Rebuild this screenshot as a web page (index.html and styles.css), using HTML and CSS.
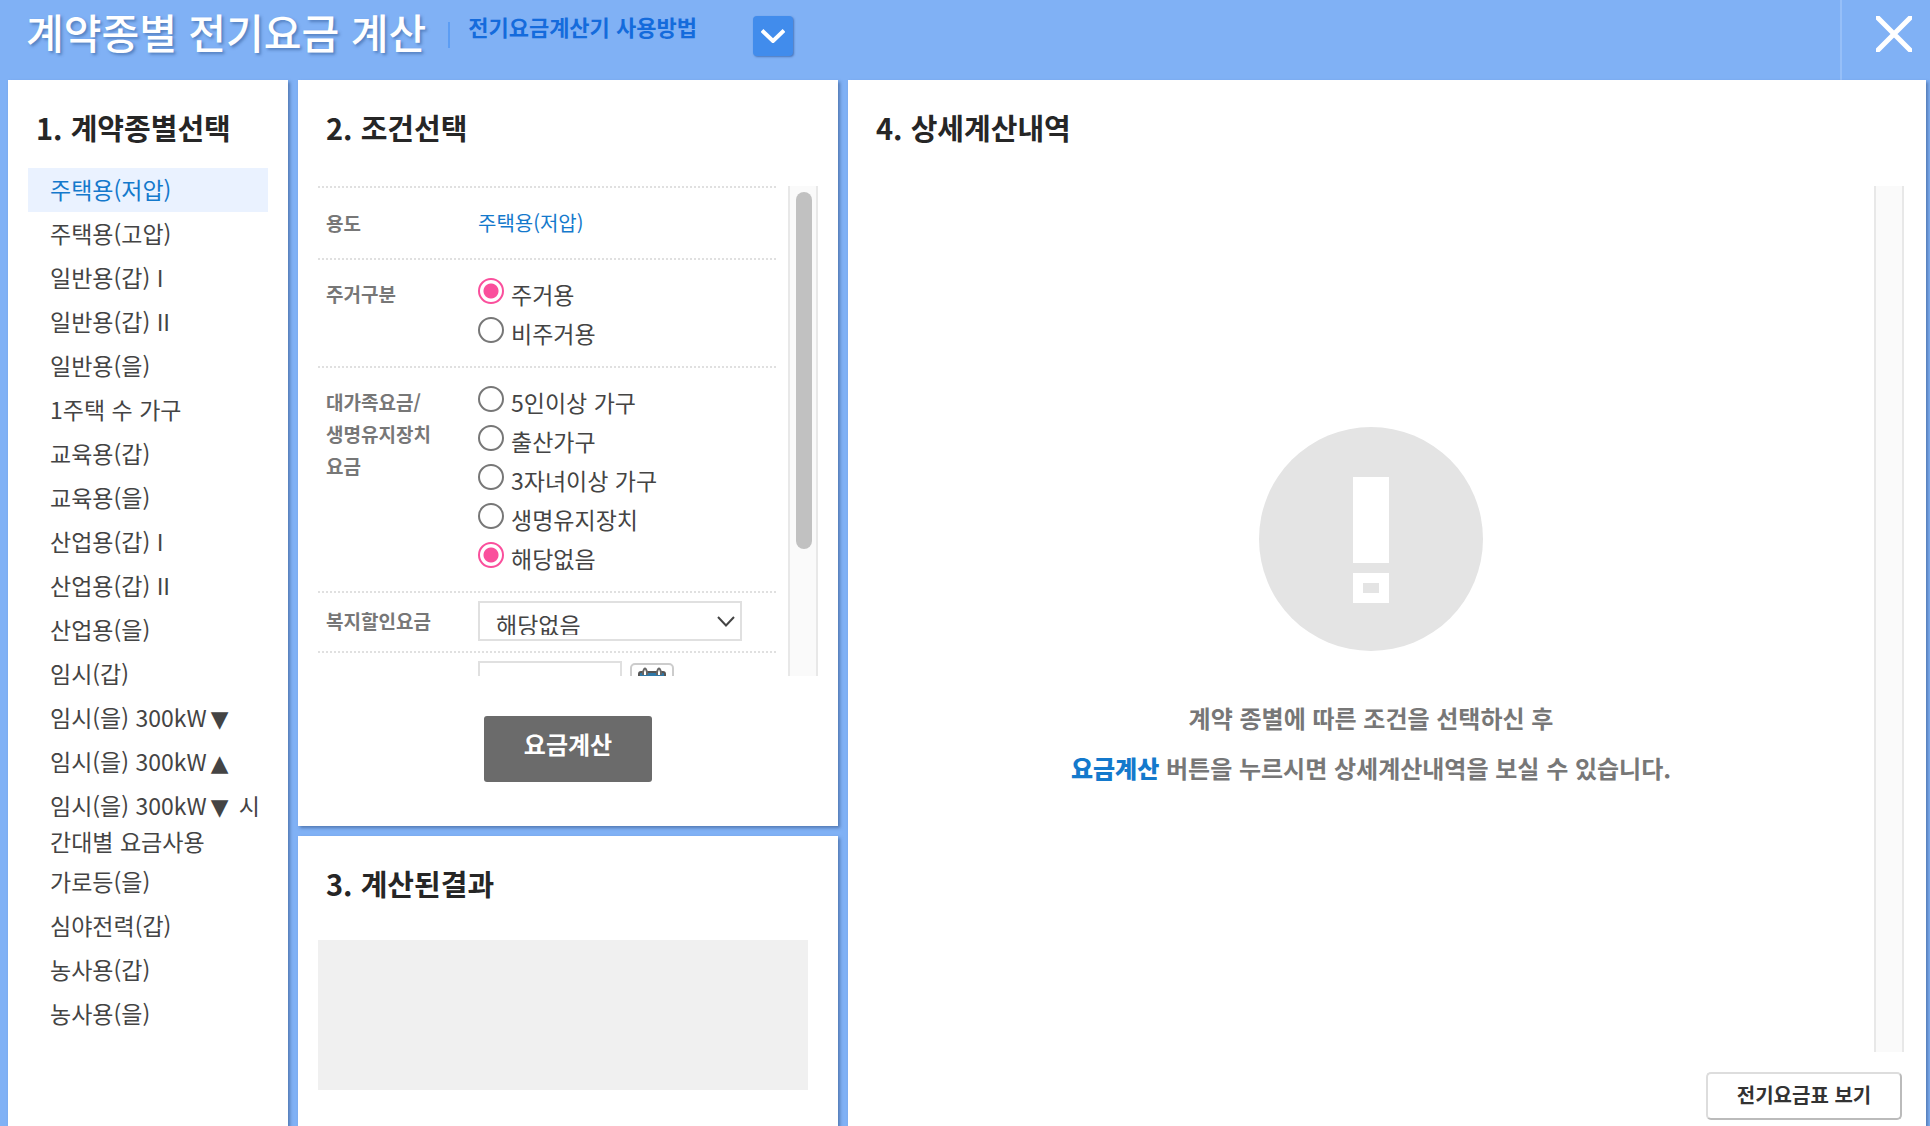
FILE: index.html
```html
<!DOCTYPE html>
<html lang="ko">
<head>
<meta charset="utf-8">
<meta name="viewport" content="width=device-width, initial-scale=1">
<title>계약종별 전기요금 계산</title>
<link rel="stylesheet" href="styles.css">
</head>
<body>
<header class="topbar">
  <h1 class="topbar-title">계약종별 전기요금 계산</h1>
  <span class="topbar-divider"></span>
  <a class="topbar-guide" href="#guide">전기요금계산기 사용방법</a>
  <button class="guide-toggle" type="button" aria-label="사용방법 펼치기">
    <svg width="24" height="14" viewBox="0 0 24 14" aria-hidden="true"><path d="M1 1.500 12 12 23 1.500" fill="none" stroke="#fff" stroke-width="4"/></svg>
  </button>
  <button class="close" type="button" aria-label="닫기">
    <svg width="36" height="36" viewBox="0 0 36 36" aria-hidden="true"><path d="M0 0 36 36M36 0 0 36" stroke="#fff" stroke-width="5"/></svg>
  </button>
</header>

<main class="board">
  <section class="panel">
    <h2 class="panel-title">1. 계약종별선택</h2>
    <ul class="contracts">
      <li><a class="contract is-active" href="#c1">주택용(저압)</a></li>
      <li><a class="contract" href="#c2">주택용(고압)</a></li>
      <li><a class="contract" href="#c3">일반용(갑) I</a></li>
      <li><a class="contract" href="#c4">일반용(갑) II</a></li>
      <li><a class="contract" href="#c5">일반용(을)</a></li>
      <li><a class="contract" href="#c6">1주택 수 가구</a></li>
      <li><a class="contract" href="#c7">교육용(갑)</a></li>
      <li><a class="contract" href="#c8">교육용(을)</a></li>
      <li><a class="contract" href="#c9">산업용(갑) I</a></li>
      <li><a class="contract" href="#c10">산업용(갑) II</a></li>
      <li><a class="contract" href="#c11">산업용(을)</a></li>
      <li><a class="contract" href="#c12">임시(갑)</a></li>
      <li><a class="contract" href="#c13">임시(을) 300kW<span class="mark">▼</span></a></li>
      <li><a class="contract" href="#c14">임시(을) 300kW<span class="mark">▲</span></a></li>
      <li><a class="contract contract-long" href="#c15">임시(을) 300kW<span class="mark">▼</span> 시<br>간대별 요금사용</a></li>
      <li><a class="contract" href="#c16">가로등(을)</a></li>
      <li><a class="contract" href="#c17">심야전력(갑)</a></li>
      <li><a class="contract" href="#c18">농사용(갑)</a></li>
      <li><a class="contract" href="#c19">농사용(을)</a></li>
    </ul>
  </section>

  <div class="middle">
    <section class="panel">
      <h2 class="panel-title">2. 조건선택</h2>
      <form class="conditions">
        <div class="scroll-area">
          <div class="fields">
            <div class="field field-center">
              <span class="field-name">용도</span>
              <span class="field-value">주택용(저압)</span>
            </div>
            <div class="field" role="radiogroup" aria-labelledby="home-name">
              <span class="field-name" id="home-name">주거구분</span>
              <div class="options">
                <label class="option"><input class="radio" type="radio" name="home" checked>주거용</label>
                <label class="option"><input class="radio" type="radio" name="home">비주거용</label>
              </div>
            </div>
            <div class="field" role="radiogroup" aria-labelledby="family-name">
              <span class="field-name" id="family-name">대가족요금/<br>생명유지장치<br>요금</span>
              <div class="options">
                <label class="option"><input class="radio" type="radio" name="family">5인이상 가구</label>
                <label class="option"><input class="radio" type="radio" name="family">출산가구</label>
                <label class="option"><input class="radio" type="radio" name="family">3자녀이상 가구</label>
                <label class="option"><input class="radio" type="radio" name="family">생명유지장치</label>
                <label class="option"><input class="radio" type="radio" name="family" checked>해당없음</label>
              </div>
            </div>
            <div class="field field-control">
              <label class="field-name" for="welfare">복지할인요금</label>
              <div class="select-wrap">
                <select class="select" id="welfare"><option>해당없음</option></select>
                <svg class="select-arrow" width="18" height="11" viewBox="0 0 18 11" aria-hidden="true"><path d="M1 1 9 9.500 17 1" fill="none" stroke="#444" stroke-width="2"/></svg>
              </div>
            </div>
            <div class="field field-control">
              <span class="field-name"></span>
              <div class="date">
                <input class="date-input" type="text" aria-label="날짜">
                <button class="date-button" type="button" aria-label="달력">
                  <svg width="30" height="28" viewBox="0 0 30 28" aria-hidden="true"><rect x="2" y="5" width="26" height="22" rx="2" fill="#2f78a8" stroke="#555" stroke-width="2"/><path d="M6 8V5q2-7 4 0v3M20 8V5q2-7 4 0v3" fill="#fff" stroke="#666" stroke-width="2"/><rect x="5" y="13" width="20" height="12" fill="#fff"/></svg>
                </button>
              </div>
            </div>
          </div>
          <div class="track"><div class="thumb"></div></div>
        </div>
        <button class="calculate" type="button">요금계산</button>
      </form>
    </section>

    <section class="panel">
      <h2 class="panel-title">3. 계산된결과</h2>
      <div class="result"></div>
    </section>
  </div>

  <section class="panel panel-detail">
    <h2 class="panel-title">4. 상세계산내역</h2>
    <div class="detail">
      <div class="notice">
        <svg width="224" height="224" viewBox="0 0 224 224" aria-hidden="true"><circle cx="112" cy="112" r="112" fill="#e4e4e4"/><path fill="#fff" fill-rule="evenodd" d="M94 50h36v86H94zM94 146h36v30H94zM104 156v10h16v-10z"/></svg>
        <p class="notice-text">계약 종별에 따른 조건을 선택하신 후<br><strong class="notice-key">요금계산</strong> 버튼을 누르시면 상세계산내역을 보실 수 있습니다.</p>
      </div>
      <div class="track"></div>
    </div>
    <button class="tariff" type="button">전기요금표 보기</button>
  </section>
</main>
</body>
</html>
```
FILE: styles.css
```css
* { box-sizing: border-box; }

body {
  margin: 0;
  min-height: 100vh;
  display: flex;
  flex-direction: column;
  background: #80b1f5;
  color: #444;
  font-family: "Noto Sans CJK KR", "Noto Sans", sans-serif;
}

a { text-decoration: none; }
button, input, select { font-family: inherit; margin: 0; }
button { padding: 0; border: 0; cursor: pointer; }
svg { display: block; }

/* top bar */
.topbar {
  height: 80px;
  display: flex;
  align-items: flex-start;
  padding-left: 26px;
}
.topbar-title {
  margin: 0;
  color: #fff;
  font-size: 41px;
  font-weight: 500;
  line-height: 62px;
  text-shadow: 2px 2px 3px rgba(40, 80, 140, 0.5);
  white-space: nowrap;
}
.topbar-divider {
  width: 2px;
  height: 26px;
  margin: 22px 18px 0 22px;
  background: #5c9df3;
}
.topbar-guide {
  color: #146bdc;
  font-size: 22px;
  font-weight: 700;
  line-height: 52px;
  white-space: nowrap;
}
.guide-toggle {
  width: 40px;
  height: 40px;
  margin: 16px 0 0 56px;
  display: grid;
  place-items: center;
  border-radius: 4px;
  background: #418cec;
  box-shadow: 1px 1px 2px rgba(20, 60, 130, 0.5);
}
.close {
  width: 90px;
  height: 80px;
  display: flex;
  align-items: flex-start;
  margin-left: auto;
  padding: 16px 0 0 34px;
  border-left: 2px solid #96bff8;
  background: none;
}

/* panels */
.board {
  flex: 1;
  display: grid;
  grid-template-columns: 280px 540px minmax(0, 1fr);
  gap: 10px;
  padding: 0 4px 0 8px;
}
.middle {
  display: grid;
  grid-template-rows: auto 1fr;
  gap: 10px;
}
.panel {
  padding: 26px 20px 0;
  background: #fff;
  box-shadow: 2px 2px 3px rgba(40, 70, 120, 0.5);
}
.panel-title {
  margin: 0 8px 38px;
  color: #262626;
  font-size: 29px;
  font-weight: 700;
  line-height: 42px;
}

/* contract list */
.contracts {
  margin: -18px 0 0;
  padding: 0;
  list-style: none;
}
.contract {
  display: block;
  height: 44px;
  padding-left: 22px;
  color: #444;
  font-size: 23px;
  line-height: 42px;
  white-space: nowrap;
}
.contract.is-active {
  background: #eaf2ff;
  color: #1479cc;
}
.contract-long {
  height: 76px;
  padding-top: 3px;
  line-height: 36px;
}
.mark {
  margin: 0 4px;
  font-family: "DejaVu Sans", sans-serif;
  line-height: 1;
}

/* conditions */
.scroll-area {
  height: 490px;
  display: flex;
  justify-content: space-between;
  overflow: hidden;
}
.fields { width: 458px; }
.field {
  display: grid;
  grid-template-columns: 152px 1fr;
  align-items: start;
  padding: 14px 0 14px 8px;
  border-top: 2px dotted #e0e0e0;
}
.field-center {
  align-items: center;
  padding-top: 19px;
  padding-bottom: 19px;
}
.field-control {
  align-items: center;
  padding-top: 8px;
  padding-bottom: 10px;
}
.field-name {
  color: #777;
  font-size: 19px;
  font-weight: 700;
  line-height: 32px;
}
.field-name:has(+ .options) { padding-top: 4px; }
.field-value {
  color: #1479cc;
  font-size: 20px;
  line-height: 32px;
}
.option {
  height: 39px;
  display: flex;
  align-items: flex-start;
  gap: 7px;
  font-size: 23px;
  line-height: 40px;
}
.radio {
  appearance: none;
  width: 26px;
  height: 26px;
  margin-top: 4px;
  border: 2px solid #777;
  border-radius: 50%;
  background: #fff;
}
.radio:checked {
  border-color: #fa4f9c;
  background: radial-gradient(circle, #fa4f9c 7px, #fff 8px);
}
.select-wrap {
  position: relative;
  width: 264px;
}
.select {
  appearance: none;
  display: block;
  width: 100%;
  height: 40px;
  padding: 4px 40px 4px 16px;
  border: 2px solid #e0e0e0;
  border-radius: 0;
  background: #fff;
  color: #444;
  font-size: 23px;
}
.select-arrow {
  position: absolute;
  top: 15px;
  right: 7px;
  pointer-events: none;
}
.date {
  display: flex;
  gap: 8px;
}
.date-input {
  width: 144px;
  height: 40px;
  border: 2px solid #e0e0e0;
  font-size: 20px;
}
.date-button {
  width: 44px;
  height: 36px;
  margin-top: 2px;
  display: grid;
  place-items: center;
  border: 2px solid #ccc;
  border-radius: 5px;
  background: #fff;
}
.track {
  width: 30px;
  padding: 6px;
  border: solid #e8e8e8;
  border-width: 0 2px;
  background: #fafafa;
}
.thumb {
  width: 16px;
  height: 357px;
  margin: 0 auto;
  border-radius: 8px;
  background: #c1c1c1;
}
.calculate {
  display: block;
  width: 168px;
  height: 66px;
  margin: 40px auto 44px;
  padding-bottom: 12px;
  border-radius: 3px;
  background: #6b6b6b;
  color: #fff;
  font-size: 24px;
  font-weight: 700;
}

/* result */
.result {
  height: 150px;
  margin: -2px 10px 0 0;
  background: #f0f0f0;
}

/* details */
.panel-detail {
  display: flex;
  flex-direction: column;
  padding-right: 22px;
  padding-bottom: 6px;
}
.detail {
  flex: 1;
  display: flex;
}
.notice {
  flex: 1;
  display: flex;
  flex-direction: column;
  align-items: center;
  justify-content: center;
  gap: 42px;
  padding-bottom: 18px;
}
.notice-text {
  margin: 0;
  color: #777;
  font-size: 24px;
  font-weight: 700;
  line-height: 50px;
  text-align: center;
}
.notice-key { color: #1479cc; }
.tariff {
  align-self: flex-end;
  width: 196px;
  height: 48px;
  margin: 20px 2px 0 0;
  padding-bottom: 4px;
  border: 2px solid #ddd;
  border-right-color: #bbb;
  border-bottom-color: #bbb;
  border-radius: 5px;
  background: #fff;
  color: #333;
  font-size: 20px;
  font-weight: 700;
}
```
